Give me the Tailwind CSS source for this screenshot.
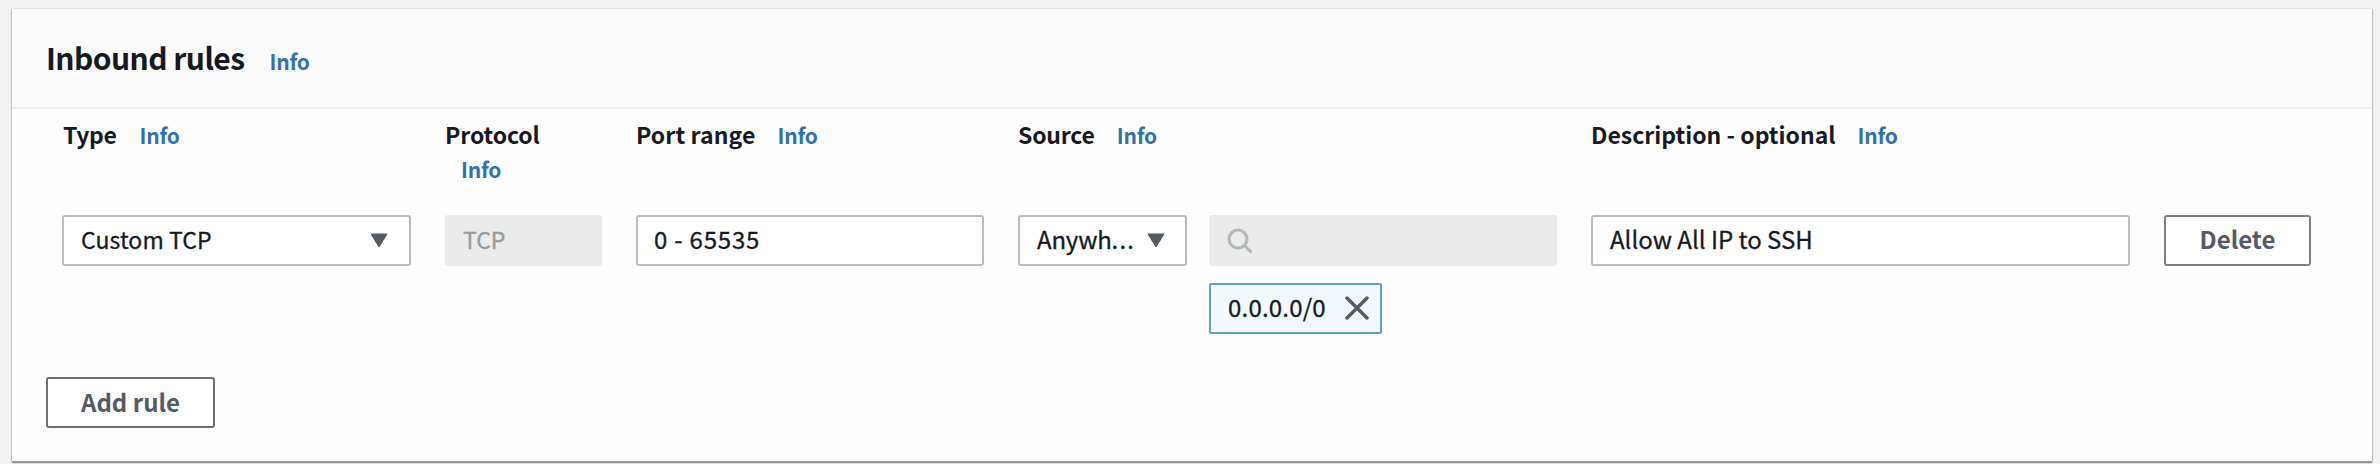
<!DOCTYPE html>
<html lang="en">
<head>
<meta charset="utf-8">
<title>Inbound rules</title>
<script src="https://cdn.jsdelivr.net/npm/@tailwindcss/browser@4"></script>
</head>
<body class="h-[464px] overflow-hidden bg-[#f1f1f1] pt-[9px] pr-[8px] pl-[12px] font-['Noto_Sans_CJK_SC','Noto_Sans',sans-serif] text-[24px] text-[#16191f]">
<main class="flex h-[452px] flex-col bg-[#fefefe] shadow-[0_2px_1px_#8f9599,-1px_0_1px_#c9cccf,1px_0_1px_#c4c7cb]">
  <header class="flex h-[100px] shrink-0 items-baseline border-b-2 border-[#ececee] bg-[#fafafa] pt-[26px] pl-[34px]">
    <h2 class="text-[30px] leading-[44px] font-bold tracking-[-0.55px] whitespace-nowrap">Inbound rules</h2>
    <a class="ml-[25px] text-[21px] leading-[34px] font-bold tracking-[-0.2px] text-[#3271ab]">Info</a>
  </header>

  <section class="grid grid-cols-[348px_157px_348px_539px_539px_147px] gap-x-[34px] pt-[8px] pl-[51px] text-[23px] leading-[34px] font-bold whitespace-nowrap">
    <div class="flex h-[98px] items-baseline"><span class="tracking-[-0.4px]">Type</span><a class="ml-[23px] text-[21px] tracking-[-0.2px] text-[#3271ab]">Info</a></div>
    <div class="flex h-[98px] flex-col"><span class="tracking-[-0.1px]">Protocol</span><a class="mt-px ml-[16px] text-[21px] tracking-[-0.2px] text-[#3271ab]">Info</a></div>
    <div class="flex h-[98px] items-baseline"><span class="tracking-[0.1px]">Port range</span><a class="ml-[22px] text-[21px] tracking-[-0.2px] text-[#3271ab]">Info</a></div>
    <div class="flex h-[98px] items-baseline"><span class="tracking-[-0.2px]">Source</span><a class="ml-[22px] text-[21px] tracking-[-0.2px] text-[#3271ab]">Info</a></div>
    <div class="flex h-[98px] items-baseline"><span>Description - optional</span><a class="ml-[22px] text-[21px] tracking-[-0.2px] text-[#3271ab]">Info</a></div>
  </section>

  <section class="grid grid-cols-[348px_157px_348px_539px_539px_147px] items-start gap-x-[34px] pl-[51px] leading-[44px] whitespace-nowrap [-webkit-text-stroke:0.3px]">
    <div class="-ml-px flex h-[51px] items-center justify-between rounded-[3px] border-2 border-[#b9bcbf] bg-white pr-[21px] pb-[3px] pl-[17px]">
      <span class="text-[23px] tracking-[0.1px]">Custom TCP</span>
      <svg class="mt-[3px] h-[15px] w-[18px]" viewBox="0 0 18 15"><path d="M1 1h16L9 14z" fill="#545b64" stroke="#545b64" stroke-linejoin="round"/></svg>
    </div>
    <div class="flex h-[51px] items-center rounded-[3px] bg-[#ebebeb] pb-[3px] pl-[18px] text-[23px] text-[#959c9c]">TCP</div>
    <div class="flex h-[51px] items-center rounded-[3px] border-2 border-[#b9bcbf] bg-white pb-[3px] pl-[16px] tracking-[0.8px]">0 - 65535</div>
    <div class="grid grid-cols-[169px_348px] gap-x-[22px] gap-y-[17px]">
      <div class="flex h-[51px] items-center justify-between rounded-[3px] border-2 border-[#b9bcbf] bg-white pr-[20px] pb-[3px] pl-[17px]">
        <span class="tracking-[-0.2px]">Anywh<span class="tracking-[1.2px]">...</span></span>
        <svg class="mt-[3px] h-[15px] w-[18px]" viewBox="0 0 18 15"><path d="M1 1h16L9 14z" fill="#545b64" stroke="#545b64" stroke-linejoin="round"/></svg>
      </div>
      <div class="flex h-[51px] items-center rounded-[3px] bg-[#ebebeb] pl-[18px]">
        <svg class="h-[26px] w-[26px]" viewBox="0 0 26 26" fill="none" stroke="#b0b8b8" stroke-width="3"><circle cx="11" cy="11" r="9"/><path d="M17.5 17.5l7 7"/></svg>
      </div>
      <div class="col-start-2 flex h-[51px] w-[173px] items-center justify-between rounded-[2px] border-2 border-[#5fa5b8] bg-[#f1f9fd] pr-[11px] pb-[1px] pl-[17px]">
        <span class="mb-[2px] tracking-[0.2px]">0.0.0.0/0</span>
        <svg class="h-[24px] w-[24px]" viewBox="0 0 24 24" fill="none" stroke="#545b64" stroke-width="3.4" stroke-linecap="round"><path d="M2 2l20 20M22 2L2 22"/></svg>
      </div>
    </div>
    <div class="flex h-[51px] items-center rounded-[3px] border-2 border-[#b9bcbf] bg-white pb-[3px] pl-[17px]">Allow All IP to SSH</div>
    <button class="flex h-[51px] items-center justify-center rounded-[3px] border-2 border-[#7c8086] bg-white pb-[3px] font-bold text-[#545b64] [-webkit-text-stroke:0]">Delete</button>
  </section>

  <footer class="mt-[43px] pl-[34px] leading-[44px]">
    <button class="flex h-[51px] w-[169px] items-center justify-center rounded-[3px] border-2 border-[#6b6f76] bg-white pb-[2px] font-bold text-[#545b64]">Add rule</button>
  </footer>
</main>
</body>
</html>
